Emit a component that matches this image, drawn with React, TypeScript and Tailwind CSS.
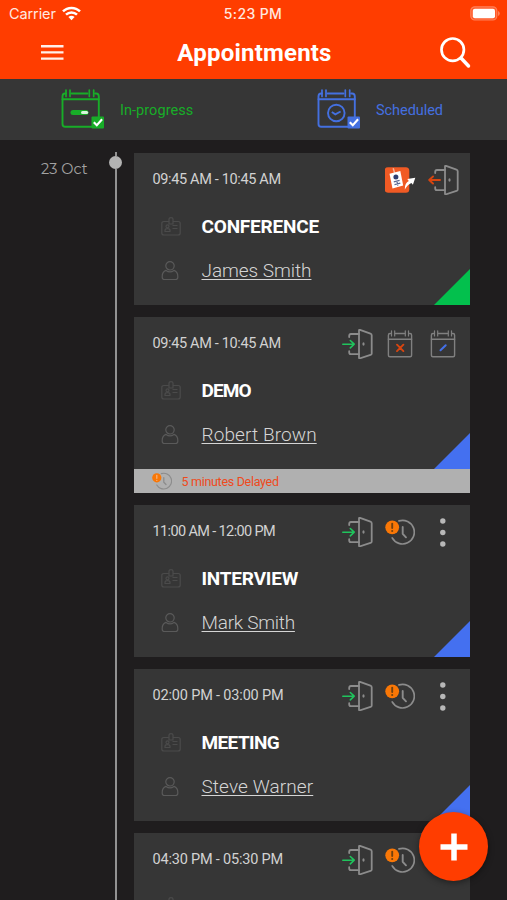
import type { ReactNode } from "react"
import clsx from "clsx"

type Action = "badge" | "exit" | "enter" | "cancel" | "edit" | "delay" | "more"

type Appointment = {
  time: string
  timeTracking: string
  title?: string
  titleTracking?: string
  name?: string
  nameTracking?: string
  status: "progress" | "scheduled"
  actions: Action[]
  delayed?: string
}

const appointments: Appointment[] = [
  {
    time: "09:45 AM - 10:45 AM",
    timeTracking: "tracking-[-0.35px]",
    title: "CONFERENCE",
    titleTracking: "tracking-[-0.2px]",
    name: "James Smith",
    nameTracking: "tracking-[-0.05px]",
    status: "progress",
    actions: ["badge", "exit"],
  },
  {
    time: "09:45 AM - 10:45 AM",
    timeTracking: "tracking-[-0.35px]",
    title: "DEMO",
    titleTracking: "tracking-[-0.9px]",
    name: "Robert Brown",
    nameTracking: "tracking-[0.1px]",
    status: "scheduled",
    actions: ["enter", "cancel", "edit"],
    delayed: "5 minutes Delayed",
  },
  {
    time: "11:00 AM - 12:00 PM",
    timeTracking: "tracking-[-0.63px]",
    title: "INTERVIEW",
    titleTracking: "tracking-[-0.2px]",
    name: "Mark Smith",
    nameTracking: "tracking-[-0.25px]",
    status: "scheduled",
    actions: ["enter", "delay", "more"],
  },
  {
    time: "02:00 PM - 03:00 PM",
    timeTracking: "tracking-[-0.17px]",
    title: "MEETING",
    titleTracking: "tracking-[-0.6px]",
    name: "Steve Warner",
    nameTracking: "tracking-[0.1px]",
    status: "scheduled",
    actions: ["enter", "delay", "more"],
  },
  {
    time: "04:30 PM - 05:30 PM",
    timeTracking: "tracking-[-0.2px]",
    status: "scheduled",
    actions: ["enter", "delay", "more"],
  },
]

const Door = ({ children }: { children: ReactNode }) => (
  <svg width="31" height="30" viewBox="0 0 31 30" fill="none" strokeLinecap="round" strokeLinejoin="round">
    <g stroke="#8c8c8c" strokeWidth="1.8">
      <path d="M17 1.4v27.400q0 .8 1 .5l10.500-3.400q1.200-.4 1.200-1.500V6.200q0-1.100-1.200-1.500L18 .9q-1-.3-1 .5z" />
      <path d="M17 5H9Q7.200 5 7.200 7v1M17 25.200H9q-1.800 0-1.800-2v-1" />
    </g>
    <ellipse cx="21.500" cy="15" rx="1.100" ry="1.700" fill="#8c8c8c" />
    {children}
  </svg>
)

const ExitIcon = () => (
  <Door>
    <path d="M12 15H1.200M5 11.500L1.200 15 5 18.500" stroke="#d8450f" strokeWidth="1.900" />
  </Door>
)

const EnterIcon = () => (
  <Door>
    <path d="M.8 15.200h11M8.300 11.500l3.900 3.700-3.900 3.700" stroke="#1fc45c" strokeWidth="1.600" />
  </Door>
)

const SmallCalendar = ({ children }: { children: ReactNode }) => (
  <svg width="30" height="30" viewBox="0 0 30 30" fill="none" strokeLinecap="round">
    <g stroke="#808080" strokeWidth="1.400">
      <path d="M5.500 4.500H5Q3.400 4.500 3.400 6.200v20.100q0 1.500 1.500 1.500h20.200q1.500 0 1.500-1.500V6.200q0-1.700-1.600-1.700h-.5M10.500 4.500h9" />
      <path d="M3.400 10.200h23.200" />
      <path d="M6.500 1.900v5M9.700 1.900v5M20.300 1.900v5M23.500 1.900v5" strokeWidth="1.200" />
    </g>
    {children}
  </svg>
)

const CancelIcon = () => (
  <SmallCalendar>
    <path d="M12 15.700l6.400 6.400M18.400 15.700L12 22.100" stroke="#d8450f" strokeWidth="1.900" />
  </SmallCalendar>
)

const EditIcon = () => (
  <SmallCalendar>
    <path d="M12.500 21.300l5.200-5" stroke="#4470e8" strokeWidth="2" />
  </SmallCalendar>
)

const DelayIcon = ({ className = "size-[30px]", faint = false }: { className?: string; faint?: boolean }) => (
  <svg className={className} viewBox="0 0 30 30" fill="none" strokeLinecap="round" strokeLinejoin="round">
    <path d="M14 3.900A11.800 11.800 0 1 1 7.200 20.900" stroke="#8c8c8c" strokeWidth="1.700" />
    <path d="M17.700 10v6.800l3.300 3.500" stroke="#8c8c8c" strokeWidth="1.900" />
    <circle cx="7.200" cy="10.300" r="6.900" fill="#f97706" />
    <path d="M7.200 6.700v4.300" stroke={faint ? "#f7b27a" : "#70400f"} strokeWidth="1.900" />
    <circle cx="7.200" cy="14" r="1.050" fill={faint ? "#f7b27a" : "#70400f"} />
  </svg>
)

const MoreIcon = () => (
  <svg width="30" height="30" viewBox="0 0 30 30" fill="#b8b8b8">
    <circle cx="14.800" cy="4" r="2.700" />
    <circle cx="14.800" cy="15.500" r="2.700" />
    <circle cx="14.800" cy="27" r="2.700" />
  </svg>
)

const BadgeIcon = () => (
  <svg width="31" height="30" viewBox="0 0 31 30">
    <rect x="-.5" y="2.300" width="24.800" height="25.400" rx="3.500" fill="#f05a24" />
    <path d="M8.200 3.300l1.500 5" stroke="#f6b39b" strokeWidth="1.500" />
    <path d="M4.500 8.700l10.800-2.600 2.900 14.300-10.700 3z" fill="#fff" />
    <circle cx="10.900" cy="12" r="2.500" fill="#2f3e72" />
    <path d="M8.800 16.800l5.800-1.500M9.500 19.700l5.800-1.500M11.800 15.700l1 5" stroke="#5c6a94" strokeWidth="1.300" />
    <path d="M19.800 24.500c0-4.500 1.400-7.200 4-8.400l-1.500-2.100 8-1.200-2.400 7-1.500-1.900c-2.400.9-4.600 3-6.600 6.600z" fill="#fff" />
  </svg>
)

const actionIcons: Record<Action, () => ReactNode> = {
  badge: () => <BadgeIcon />,
  exit: () => <ExitIcon />,
  enter: () => <EnterIcon />,
  cancel: () => <CancelIcon />,
  edit: () => <EditIcon />,
  delay: () => <DelayIcon />,
  more: () => <MoreIcon />,
}

const IdCardIcon = () => (
  <svg width="20" height="20" viewBox="0 0 20 20" fill="none" stroke="#4b4b4b" strokeWidth="1.200">
    <path d="M8 4.500H3Q.8 4.500.8 6.500V16q0 2 2.200 2h14q2.200 0 2.200-2V6.500q0-2-2.200-2h-5" />
    <path d="M8 7V2q0-1.400 2-1.400T12 2v5z" />
    <circle cx="6.500" cy="9.300" r="1.500" />
    <path d="M4 14.500v-1q0-1.800 2.500-1.800T9 13.500v1zM11.500 8.500h5M11.500 11.500h5" />
  </svg>
)

const PersonIcon = () => (
  <svg width="18" height="20" viewBox="0 0 18 20" fill="none" stroke="#5a5a5a" strokeWidth="1.200">
    <circle cx="9" cy="4.800" r="4.200" />
    <path d="M5 9.400Q1.200 10.800 1.200 15.500v.8q0 2.200 2.200 2.200h11.200q2.200 0 2.200-2.200v-.8q0-4.700-3.800-6.100-4 2.800-8 0z" />
  </svg>
)

const LegendCalendar = ({ children, color }: { children: ReactNode; color: string }) => (
  <svg width="44" height="42" viewBox="0 0 44 42" fill="none">
    <g stroke={color} strokeWidth="1.900" strokeLinecap="round">
      <path d="M6 4.500H5Q2.500 4.500 2.500 7.500V35q0 2.800 2.800 2.800H38.800V7.500q0-3-2.700-3h-1M11.500 4.500h16" />
      <path d="M2.500 10.300h36.300" />
      <path d="M6 1v6.500M10 1v6.500M29.300 1v6.500M33.700 1v6.500" strokeWidth="1.700" />
    </g>
    {children}
    <rect x="31.500" y="27.500" width="12.500" height="12" rx="1" fill={color} />
    <path d="M33.800 33.300l3 3 5.300-6" stroke="#fff" strokeWidth="2.100" />
  </svg>
)

const Card = ({ item }: { item: Appointment }) => (
  <article className="shrink-0">
    <div className="relative h-[152px] bg-[#363636] pt-3 pr-3 pl-[18px]">
      <div className="flex h-[30px] items-start justify-between">
        <time
          className={clsx("mt-[5px] ml-[0.5px] whitespace-nowrap text-[14.5px] leading-5 text-[#d2d2d2]", item.timeTracking)}
        >
          {item.time}
        </time>
        <div className="flex gap-[13px]">
          {item.actions.map((action) => (
            <span key={action} className="size-[30px]">
              {actionIcons[action]()}
            </span>
          ))}
        </div>
      </div>
      <div className="mt-5 flex h-6 items-center">
        <span className="flex w-[49.5px] pl-[9px]">
          <IdCardIcon />
        </span>
        {item.title && (
          <h2 className={clsx("text-[19px] leading-6 font-bold text-white", item.titleTracking)}>{item.title}</h2>
        )}
      </div>
      {item.name && (
        <div className="mt-5 flex h-6 items-center">
          <span className="flex w-[49.5px] pl-[9px]">
            <PersonIcon />
          </span>
          <a
            className={clsx(
              "text-[19px] leading-6 font-light text-[#d5d5d5] underline decoration-1 underline-offset-2",
              item.nameTracking,
            )}
          >
            {item.name}
          </a>
        </div>
      )}
      <svg className="absolute right-0 bottom-0" width="36" height="36" viewBox="0 0 36 36">
        <path d="M36 0v36H0z" fill={item.status === "progress" ? "#03c04d" : "#4470f0"} />
      </svg>
    </div>
    {item.delayed && (
      <div className="flex h-6 items-center bg-[#b0b0b0] pl-[18px]">
        <DelayIcon className="size-5" faint />
        <span className="mt-[3px] ml-[9.5px] text-[12.5px] tracking-[-0.3px] text-[#ef4a1c]">{item.delayed}</span>
      </div>
    )}
  </article>
)

export default function App() {
  return (
    <div className="relative flex h-[900px] w-[507px] flex-col overflow-hidden bg-[#1f1d1e] font-[Roboto,sans-serif]">
      <header className="h-[79px] shrink-0 bg-[#ff3d00] text-white">
        <div className="grid h-[27px] grid-cols-3 items-center pr-[7px] pl-[9px] text-[14px] text-[#ffe9e0]">
          <div className="flex items-center gap-[6px]">
            <span className="font-[Inter,sans-serif] text-[14.5px] tracking-[-0.1px]">Carrier</span>
            <svg width="19" height="15" viewBox="0 0 19 15" fill="none" stroke="#fff" strokeWidth="2.500">
              <path d="M1 5.400C5.700.7 13.300.7 18 5.400M4 8.700c3.100-3 7.900-3 11 0" />
              <path d="M9.500 14.200L6.400 11.100q3.100-2.700 6.200 0z" fill="#fff" stroke="none" />
            </svg>
          </div>
          <span className="-ml-[3px] text-center font-[Inter,sans-serif] text-[14px] font-medium tracking-[0.35px]">
            5:23 PM
          </span>
          <svg className="justify-self-end" width="30" height="15" viewBox="0 0 30 15">
            <rect x=".8" y=".8" width="26" height="13.200" rx="4" fill="#ff5a28" stroke="#ff8059" strokeWidth="1.200" />
            <rect x="2.800" y="2.700" width="22.200" height="9.500" rx="2" fill="#fff" />
            <path d="M28 5v5q1.800-.8 1.800-2.500T28 5z" fill="#ff8059" />
          </svg>
        </div>
        <div className="flex h-[52px] items-center justify-between pr-9 pl-[41px]">
          <svg width="23" height="18" viewBox="0 0 23 18" stroke="#fff0ea" strokeWidth="2.400">
            <path d="M0 2.200h22.500M0 8.400h22.500M0 14.600h22.500" />
          </svg>
          <h1 className="ml-[6px] text-[24px] leading-7 font-bold tracking-[0.2px]">Appointments</h1>
          <svg width="32" height="32" viewBox="0 0 32 32" fill="none" stroke="#fff" strokeLinecap="round">
            <circle cx="13.700" cy="12.700" r="11.200" strokeWidth="2.700" />
            <path d="M22 21l7.500 8" strokeWidth="3.400" />
          </svg>
        </div>
      </header>

      <section className="flex h-[61px] shrink-0 items-center bg-[#363636] pl-[60px]">
        <div className="flex w-64 items-center gap-4">
          <LegendCalendar color="#18ad28">
            <rect x="10.500" y="21" width="18" height="5" rx="2.500" fill="#18ad28" />
            <path d="M22.500 23.500h4.200" stroke="#d8f5dc" strokeWidth="3" strokeLinecap="round" />
          </LegendCalendar>
          <span className="mt-[3px] text-[14.500px] tracking-[0.05px] text-[#18ad28]">In-progress</span>
        </div>
        <div className="flex items-center gap-4">
          <LegendCalendar color="#4470e0">
            <circle cx="20.300" cy="24" r="8.300" stroke="#4470e0" strokeWidth="1.900" />
            <path d="M15.800 23l3.500 2.300 5.300-2.800" stroke="#4470e0" strokeWidth="1.900" />
          </LegendCalendar>
          <span className="mt-[3px] text-[14.500px] tracking-[-0.05px] text-[#4470e0]">Scheduled</span>
        </div>
      </section>

      <main className="flex min-h-0 flex-1 pt-3">
        <div className="w-[109px] pt-[7px] pl-[41px] font-[Montserrat,Inter,sans-serif] text-[14.500px] text-[#a3a3a3]">
          23 Oct
        </div>
        <div className="flex w-[25px] flex-col items-start">
          <span className="ml-[6px] h-1 w-[2px] bg-[#929292]" />
          <span className="size-[13px] rounded-full bg-[#b3b3b3]" />
          <span className="ml-[6px] w-[2px] flex-1 bg-[#929292]" />
        </div>
        <div className="flex w-[336px] flex-col gap-3 pt-[0.5px]">
          {appointments.map((item, i) => (
            <Card key={i} item={item} />
          ))}
        </div>
      </main>

      <button
        aria-label="Add appointment"
        className="absolute right-[19px] bottom-[19px] flex size-[69px] items-center justify-center rounded-full bg-[#ff3d00] shadow-[0_2px_6px_rgba(0,0,0,0.4)]"
      >
        <svg width="28" height="28" viewBox="0 0 28 28" stroke="#fff" strokeWidth="5.500">
          <path d="M14 .500v27M.500 14h27" />
        </svg>
      </button>
    </div>
  )
}
